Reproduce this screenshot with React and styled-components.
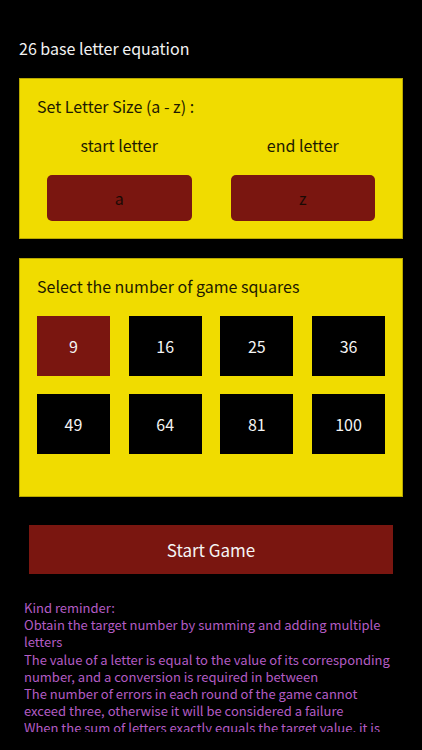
import React from 'react';
import styled, { createGlobalStyle } from 'styled-components';

const GlobalStyle = createGlobalStyle`
  html, body {
    margin: 0;
    padding: 0;
    background: #000;
  }
  body {
    font-family: 'Noto Sans CJK KR', 'Noto Sans', sans-serif;
    width: 422px;
    height: 750px;
    overflow: hidden;
  }
`;

const Screen = styled.div`
  display: flex;
  flex-direction: column;
  width: 422px;
  height: 750px;
  background: #000;
  overflow: hidden;
`;

const Title = styled.div`
  flex-shrink: 0;
  color: #f2f2f2;
  font-size: 16px;
  line-height: 20px;
  padding: 38px 19px 0;
`;

const Panel = styled.section`
  flex-shrink: 0;
  margin: ${(p) => p.mt}px 19px 0;
  height: ${(p) => p.h}px;
  box-sizing: border-box;
  background: #f0dc00;
  border: 1px solid #b8a800;
  padding: 17px 17px 0;
  color: #1e1a00;
`;

const PanelHeading = styled.div`
  font-size: 16px;
  line-height: 20px;
`;

const LetterGrid = styled.div`
  display: grid;
  grid-template-columns: 1fr 1fr;
  column-gap: 39px;
  padding: 19px 10px 0;
`;

const LetterCol = styled.div`
  display: flex;
  flex-direction: column;
  align-items: center;
  gap: 20px;
`;

const LetterLabel = styled.div`
  font-size: 16px;
  line-height: 20px;
`;

const LetterButton = styled.div`
  width: 100%;
  height: 46px;
  border-radius: 5px;
  background: #7a1610;
  color: #1a0a05;
  display: flex;
  align-items: center;
  justify-content: center;
  font-size: 16px;
`;

const SquareGrid = styled.div`
  display: grid;
  grid-template-columns: repeat(4, 73px);
  column-gap: 18.7px;
  row-gap: 18px;
  margin-top: 20px;
`;

const Square = styled.div`
  height: 60px;
  background: ${(p) => (p.active ? '#7a1610' : '#000')};
  color: #f4f4f4;
  display: flex;
  align-items: center;
  justify-content: center;
  font-size: 16px;
`;

const StartButton = styled.div`
  flex-shrink: 0;
  margin: 28px 29px 0;
  height: 49px;
  background: #7a1610;
  color: #f4f4f4;
  display: flex;
  align-items: center;
  justify-content: center;
  font-size: 17px;
`;

const Reminder = styled.div`
  flex-shrink: 0;
  height: 133px;
  overflow: hidden;
  margin: 25px 25px 0 24px;
  color: #b35cc4;
  font-size: 13px;
  line-height: 17.2px;
`;

const squares = [9, 16, 25, 36, 49, 64, 81, 100];

const reminders = [
  'Kind reminder:',
  'Obtain the target number by summing and adding multiple letters',
  'The value of a letter is equal to the value of its corresponding number, and a conversion is required in between',
  'The number of errors in each round of the game cannot exceed three, otherwise it will be considered a failure',
  'When the sum of letters exactly equals the target value, it is considered a success',
];

export default function App() {
  return (
    <Screen>
      <GlobalStyle />
      <Title>26 base letter equation</Title>
      <Panel mt={20} h={161}>
        <PanelHeading>Set Letter Size (a - z) :</PanelHeading>
        <LetterGrid>
          <LetterCol>
            <LetterLabel>start letter</LetterLabel>
            <LetterButton>a</LetterButton>
          </LetterCol>
          <LetterCol>
            <LetterLabel>end letter</LetterLabel>
            <LetterButton>z</LetterButton>
          </LetterCol>
        </LetterGrid>
      </Panel>
      <Panel mt={19} h={239}>
        <PanelHeading>Select the number of game squares</PanelHeading>
        <SquareGrid>
          {squares.map((n, i) => (
            <Square key={n} active={i === 0}>
              {n}
            </Square>
          ))}
        </SquareGrid>
      </Panel>
      <StartButton>Start Game</StartButton>
      <Reminder>
        {reminders.map((line) => (
          <div key={line}>{line}</div>
        ))}
      </Reminder>
    </Screen>
  );
}
